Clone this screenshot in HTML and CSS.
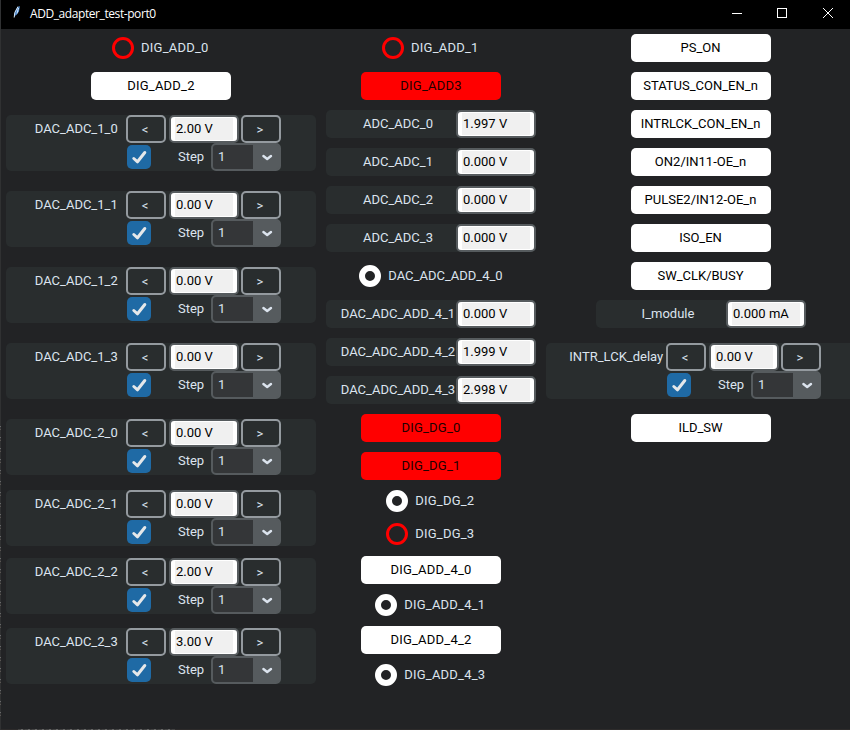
FILE: index.html
```html
<!DOCTYPE html>
<html lang="en">
<head>
<meta charset="utf-8">
<title>ADD_adapter_test-port0</title>
<link rel="stylesheet" href="styles.css">
</head>
<body>
<header class="titlebar">
  <svg class="feather" width="9" height="14" viewBox="0 0 9 14"><path d="M1.5 11 2 7 4.5 2.5 7 1 6 6.5 3.5 10Z" fill="#4d86c6"/><path d="M1.2 12.5 1.8 7.5 5 1.5M4 8.5 5.5 3" stroke="#d6eaff" fill="none"/></svg>
  <h1 class="title">ADD_adapter_test-port0</h1>
  <svg class="controls" width="104" height="12" viewBox="0 0 104 12" fill="none" stroke="#fff"><path d="M1 6.5H11"/><rect x="46.5" y="1.5" width="9" height="9"/><path d="M92 1 102 11M102 1 92 11"/></svg>
</header>
<main class="board" id="board"></main>
<script src="board.js"></script>
</body>
</html>
```
FILE: board.js
```js
// Each item: kind, label, value or state, rows spanned
const columns = [
  [
    ['radio', 'DIG_ADD_0', 'red'],
    ['button', 'DIG_ADD_2', 'white'],
    ['dac', 'DAC_ADC_1_0', '2.00 V'],
    ['dac', 'DAC_ADC_1_1', '0.00 V'],
    ['dac', 'DAC_ADC_1_2', '0.00 V'],
    ['dac', 'DAC_ADC_1_3', '0.00 V'],
    ['dac', 'DAC_ADC_2_0', '0.00 V'],
    ['dac', 'DAC_ADC_2_1', '0.00 V'],
    ['dac', 'DAC_ADC_2_2', '2.00 V'],
    ['dac', 'DAC_ADC_2_3', '3.00 V']
  ],
  [
    ['radio', 'DIG_ADD_1', 'red'],
    ['button', 'DIG_ADD3', 'red'],
    ['adc', 'ADC_ADC_0', '1.997 V'],
    ['adc', 'ADC_ADC_1', '0.000 V'],
    ['adc', 'ADC_ADC_2', '0.000 V'],
    ['adc', 'ADC_ADC_3', '0.000 V'],
    ['radio', 'DAC_ADC_ADD_4_0', 'white'],
    ['adc', 'DAC_ADC_ADD_4_1', '0.000 V'],
    ['adc', 'DAC_ADC_ADD_4_2', '1.999 V'],
    ['adc', 'DAC_ADC_ADD_4_3', '2.998 V'],
    ['button', 'DIG_DG_0', 'red'],
    ['button', 'DIG_DG_1', 'red'],
    ['radio', 'DIG_DG_2', 'white'],
    ['radio', 'DIG_DG_3', 'red'],
    ['button', 'DIG_ADD_4_0', 'white'],
    ['radio', 'DIG_ADD_4_1', 'white'],
    ['button', 'DIG_ADD_4_2', 'white'],
    ['radio', 'DIG_ADD_4_3', 'white']
  ],
  [
    ['button', 'PS_ON', 'white'],
    ['button', 'STATUS_CON_EN_n', 'white'],
    ['button', 'INTRLCK_CON_EN_n', 'white'],
    ['button', 'ON2/IN11-OE_n', 'white'],
    ['button', 'PULSE2/IN12-OE_n', 'white'],
    ['button', 'ISO_EN', 'white'],
    ['button', 'SW_CLK/BUSY', 'white'],
    ['adc', 'I_module', '0.000 mA'],
    ['dac', 'INTR_LCK_delay', '0.00 V'],
    ['button', 'ILD_SW', 'white']
  ]
];

const spacing = label => label.startsWith('DIG_') ? ' spaced' : '';

const templates = {
  radio: (label, tone) => `<label class="radio${spacing(label)}"><span class="ring ring-${tone}"></span><span class="radio-label">${label}</span></label>`,
  button: (label, tone) => `<button class="toggle toggle-${tone}${spacing(label)}">${label}</button>`,
  adc: (label, value) => `<section class="panel adc"><span class="adc-label">${label}</span><span class="entry"><span class="entry-text">${value}</span></span></section>`,
  dac: (label, value) => `<section class="panel dac">
    <div class="dac-row"><span class="dac-label"><span>${label}</span></span><button class="step-button">&lt;</button><span class="entry dac-entry"><span class="entry-text">${value}</span></span><button class="step-button">&gt;</button></div>
    <div class="dac-row lower"><span class="check"><svg width="24" height="24" viewBox="0 0 24 24"><path d="M6.8 13.5 10.5 16.8 17.8 7.5" fill="none" stroke="#e5e8ea" stroke-width="3" stroke-linecap="round" stroke-linejoin="round"/></svg></span><span class="step-label">Step</span><span class="combo"><span class="combo-value">1</span><svg class="combo-arrow" width="26" height="24" viewBox="0 0 26 24"><path d="M10.4 11 14.2 14 18 11" fill="none" stroke="#dce4ee" stroke-width="2.4" stroke-linecap="round" stroke-linejoin="round"/></svg></span></div>
  </section>`
};

const board = document.getElementById('board');
columns.forEach((items, column) => {
  let row = 1;
  items.forEach(([kind, label, state]) => {
    const span = kind === 'dac' ? 2 : 1;
    const cell = document.createElement('div');
    cell.className = 'cell';
    cell.style.gridArea = `${row} / ${column + 1} / span ${span} / auto`;
    cell.innerHTML = templates[kind](label, state);
    board.append(cell);
    row += span;
  });
});
```
FILE: styles.css
```css
* { box-sizing: border-box; }
body {
  margin: 0;
  width: 850px;
  height: 730px;
  overflow: hidden;
  padding-left: 1px;
  /* window edge with traces of the desktop behind it */
  background:
    repeating-linear-gradient(#303132 0 3px, #68696a 3px 4px, #3a3a3b 4px 6px, #595552 6px 7px, #303132 7px 11px) 0 423px / 1px 300px no-repeat,
    repeating-linear-gradient(90deg, #444 0 3px, #666 3px 5px, #3a3a3a 5px 7px) 18px 729px / 157px 1px no-repeat,
    linear-gradient(#303132, #303132) 0 0 / 1px 100% no-repeat,
    linear-gradient(#2d2b2b, #2d2b2b) 0 729px / 100% 1px no-repeat,
    #222325;
  color: #dce4ee;
  font: 13px/15px Roboto, sans-serif;
}
button { font: inherit; padding: 0; }
.titlebar {
  height: 29px;
  background: #000;
  display: flex;
  align-items: center;
  padding: 0 15px 3px 12px;
}
.feather { margin: -2px 8px 0 0; }
.title {
  flex: 1;
  margin: 0;
  padding-top: 1px;
  color: #fff;
  font: 12px/16px "Open Sans", sans-serif;
  letter-spacing: -0.42px;
}
.board {
  display: grid;
  grid-template-columns: 320px 220px 320px;
  grid-template-rows: repeat(12, 38px) 32px 34px 38px 32px 38px 32px;
}
.cell { display: flex; align-items: center; justify-content: center; }
.radio { display: flex; align-items: center; gap: 7px; }
.radio.spaced { margin-right: 1.4px; }
.radio-label { padding-bottom: 2px; }
.spaced { letter-spacing: 0.22px; }
.ring {
  width: 22px;
  height: 22px;
  border-radius: 50%;
  border: 3px solid #f00;
}
.ring-white { border: 6px solid #fff; }
.toggle {
  width: 140px;
  height: 28px;
  border: 0;
  border-radius: 5px;
  background: #fff;
  color: #000;
  padding: 0 1px 2px 0;
}
.toggle.spaced { padding-right: 0; }
.toggle-red { background: #f00; color: #200000; }
.panel { background: #292d2e; border-radius: 5px; }
.adc { width: 210px; height: 28px; display: flex; }
.adc-label { width: 130px; padding-left: 14px; line-height: 28px; text-align: center; white-space: nowrap; }
.entry {
  width: 80px;
  height: 28px;
  border: 2px solid #565b5e;
  border-radius: 5px;
  background: #fff;
  padding: 1px 4px;
  color: #000;
}
.entry-text { display: block; height: 22px; line-height: 22px; background: #f0f0f0; padding-left: 1px; }
.dac { width: 310px; height: 56px; }
.dac-row { display: flex; height: 28px; }
.dac-label { width: 120px; padding-left: 20.5px; display: flex; justify-content: center; line-height: 28px; }
.step-button {
  width: 40px;
  height: 28px;
  border: 2px solid #949a9f;
  border-radius: 5px;
  background: transparent;
  color: #dce4ee;
  padding-right: 2px;
}
.dac-entry { width: 70px; margin: 0 2px 0 3px; }
.lower { padding-left: 121px; align-items: center; }
.check { width: 24px; height: 24px; border-radius: 5px; background: #1f6aa5; }
.check svg { display: block; }
.step-label { width: 60px; padding: 0 0 2px 27px; }
.combo {
  width: 70px;
  height: 28px;
  display: flex;
  border: 2px solid #565b5e;
  border-radius: 5px;
  background: #565b5e;
}
.combo-value { width: 40px; line-height: 24px; padding-left: 5px; background: #343638; border-radius: 3px 0 0 3px; }
```
